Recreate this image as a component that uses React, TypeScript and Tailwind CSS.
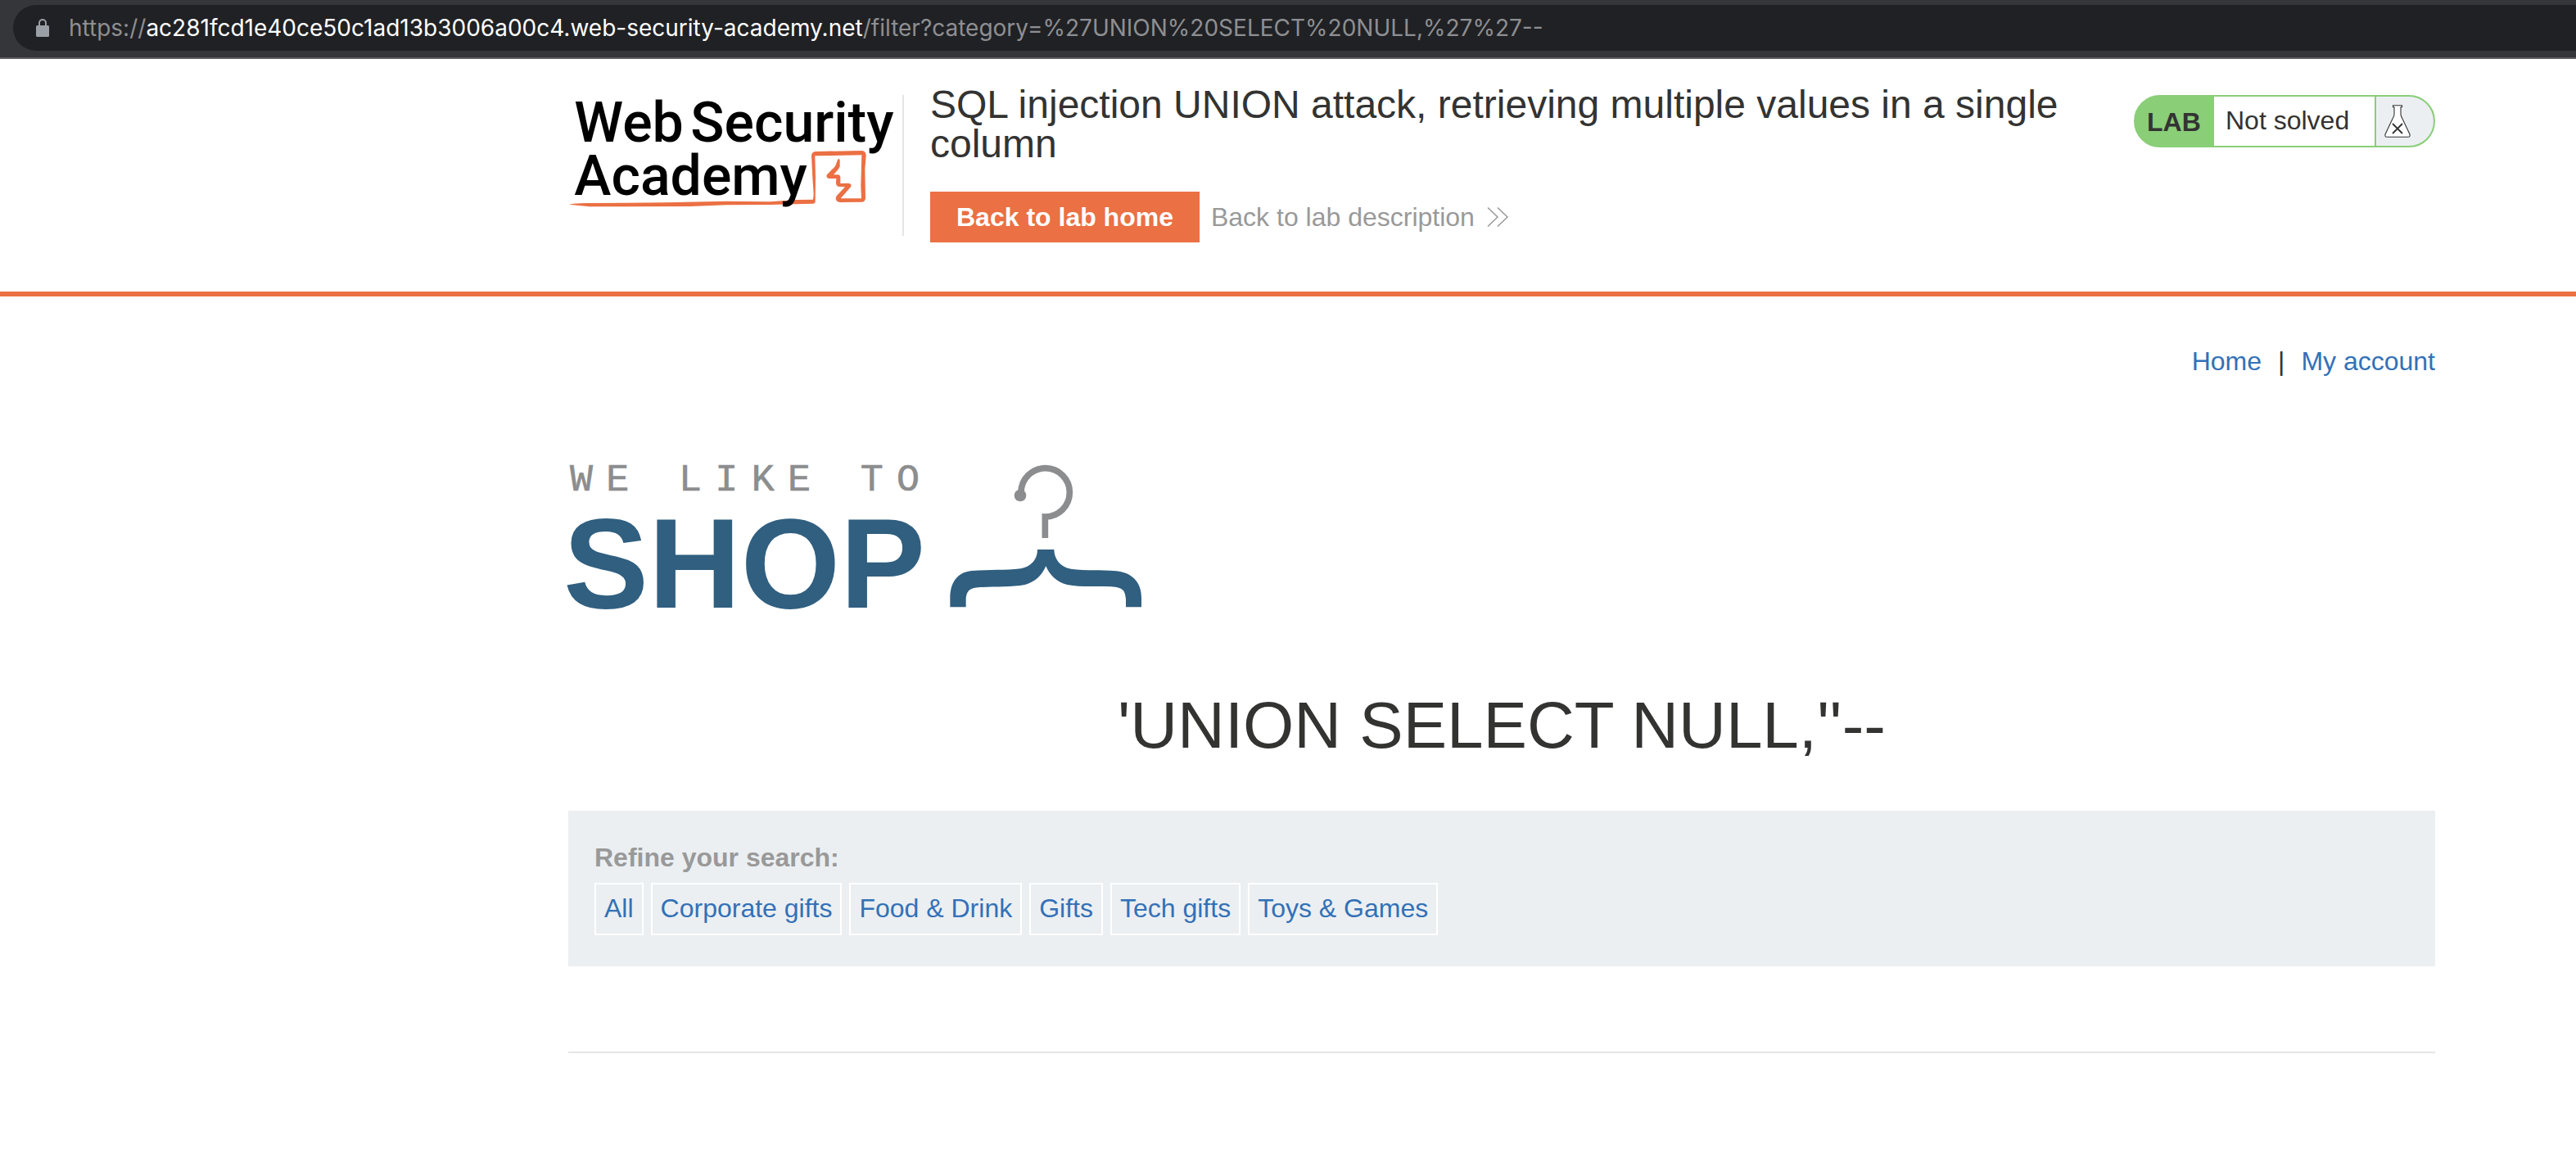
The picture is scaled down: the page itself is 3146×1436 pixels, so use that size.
const categories = ["All", "Corporate gifts", "Food & Drink", "Gifts", "Tech gifts", "Toys & Games"];

function AddressBar() {
  return (
    <div className="h-[72px] border-b-2 border-[#605b62] bg-[#35363a] pt-[6px] pl-4">
      <div className="flex h-14 items-center rounded-l-full bg-[#202124] pl-7">
        <svg className="mr-6 h-[22px] w-4 shrink-0" viewBox="0 0 16 22" fill="none">
          <path d="M4 9V5a4 4 0 0 1 8 0v4" stroke="#9aa0a6" strokeWidth="2" />
          <rect x="0" y="8" width="16" height="14" rx="1.5" fill="#9aa0a6" />
        </svg>
        <p className="whitespace-nowrap font-['Inter',sans-serif] text-[28px] leading-9 text-[#8e8f92]">
          https://
          <span className="text-white">ac281fcd1e40ce50c1ad13b3006a00c4.web-security-academy.net</span>
          /filter?category=%27UNION%20SELECT%20NULL,%27%27--
        </p>
      </div>
    </div>
  );
}

function AcademyLogo() {
  return (
    <svg
      className="mt-10 h-36 w-[400px] shrink-0 overflow-visible"
      viewBox="42 66 1200 432"
      role="img"
      aria-label="Web Security Academy"
    >
      <g fill="#eb7043">
        <path d="M44 479Q70 473 120 474L400 472L620 467L780 469L880 462L939 461L941 440L937 380L933 300Q934 286 948 285L1118 282Q1133 283 1133 300L1129 350L1131 455Q1130 470 1116 470L1038 471Q1022 470 1022 456L1025 448L1056 415L1030 413Q1022 410 1023 398L1024 384L996 384Q985 380 990 370L1020 339L1029 316Q1033 306 1037 316L1037 340Q1033 350 1025 358L1014 370L1030 370Q1039 371 1039 380L1039 402L1068 401Q1083 404 1077 415L1040 457L1116 457L1114 410L1117 298L946 301L948 380L947 470Q946 476 938 476L780 480L620 481L490 486L120 487Z" />
      </g>
      <g fill="#000" fontFamily="Roboto, sans-serif" fontWeight="500">
        <text x="64" y="250" fontSize="204">Web</text>
        <text x="490" y="250" fontSize="204">Security</text>
        <text x="64" y="444" fontSize="204">Academy</text>
      </g>
    </svg>
  );
}

function LabStatus() {
  return (
    <div className="mt-11 flex h-16 w-[368px] shrink-0 overflow-hidden rounded-full border-2 border-[#8ace78] bg-[#8ace78] text-[32px] leading-9 text-[#333332]">
      <p className="w-24 pt-[13px] pl-[14px] font-bold">LAB</p>
      <p className="flex-1 bg-white pt-[11px] pl-[14px]">Not solved</p>
      <div className="w-[72px] border-l-2 border-[#8ace78] bg-[#ebeff2] pt-[10px] pl-[10px]">
        <svg className="h-10 w-8" viewBox="0 0 32 40" fill="none" stroke="#333332">
          <path
            d="M10.500 .8H21.500V2.800H20V12Q20.500 14 22 17L31 36Q31.600 39.300 29 39.300H3Q.4 39.300 1 36L10 17Q11.800 14 12 12V2.800H10.500Z"
            fill="#fff"
            strokeWidth="1.100"
          />
          <path d="M10 23L22 35M22 23L10 35" strokeWidth="1.800" />
        </svg>
      </div>
    </div>
  );
}

function ShopLogo() {
  return (
    <svg
      className="mt-[101px] h-[190px] w-[704px] overflow-visible"
      viewBox="72 60 2112 570"
      role="img"
      aria-label="We like to shop"
    >
      <text
        x="78 211 344 477 610 743 876 1009 1142 1275"
        y="178"
        fontSize="140"
        fill="#8c8d8e"
        stroke="#8c8d8e"
        strokeWidth="2"
        fontFamily="'Liberation Mono', monospace"
      >
        WE LIKE TO
      </text>
      <text
        x="54"
        y="606"
        fontSize="468"
        fontWeight="700"
        fill="#305f80"
        fontFamily="'Liberation Sans', Arial, sans-serif"
      >
        SHOP
      </text>
      <g transform="translate(1290 0)">
        <path d="M441 184A89 89 0 1 1 529 273V351" fill="none" stroke="#8c8d8e" strokeWidth="23" />
        <circle cx="438" cy="195" r="22" fill="#8c8d8e" />
        <path
          d="M501 393H562C562 425 582 457 624 464C680 472 730 465 790 472C850 478 882 515 882 570V604H825V575C822 540 812 532 770 529C710 526 660 532 610 522C570 512 545 485 532 454C519 485 493 512 455 522C410 531 350 528 300 531C255 532 240 540 239 580V604H181V570C181 515 207 476 260 471C330 466 380 470 440 463C480 455 501 428 501 393Z"
          fill="#305f80"
        />
      </g>
    </svg>
  );
}

export default function App() {
  return (
    <div className="min-h-screen bg-white font-['Liberation_Sans',Arial,sans-serif] text-[32px] leading-9 text-[#333332]">
      <AddressBar />

      <header className="flex items-start border-b-[6px] border-[#eb7043] pr-[172px] pb-[60px] pl-[694px]">
        <AcademyLogo />
        <div className="mt-11 mr-8 ml-2 h-[172px] w-[2px] shrink-0 bg-[#e5e5e5]" />
        <div className="min-w-0 flex-1 pt-8 pr-8">
          <h2 className="text-[48px] leading-[48px]">
            SQL injection UNION attack, retrieving multiple values in a single column
          </h2>
          <div className="mt-[34px] flex items-center gap-[14px]">
            <a href="#home" className="bg-[#eb7043] px-8 py-[13px] font-bold text-white">
              Back to lab home
            </a>
            <a href="#description" className="flex items-center gap-[14px] text-[#999]">
              Back to lab description
              <svg className="h-6 w-7" viewBox="0 0 28 24" fill="none" stroke="#999" strokeWidth="1.500">
                <path d="M2 .5L14 12L2 23.500M14 .5L26 12L14 23.500" />
              </svg>
            </a>
          </div>
        </div>
        <LabStatus />
      </header>

      <main className="pr-[172px] pl-[694px]">
        <nav className="flex justify-end gap-5 pt-[61px]">
          <a href="#home" className="text-[#3371b7]">Home</a>
          <span>|</span>
          <a href="#account" className="text-[#3371b7]">My account</a>
        </nav>

        <ShopLogo />

        <h1 className="mt-24 text-center text-[80px] leading-[80px]">'UNION SELECT NULL,''--</h1>

        <section className="mt-16 bg-[#ebeff2] px-8 pt-[39px] pb-[38px]">
          <h3 className="font-bold text-[#999]">Refine your search:</h3>
          <div className="mt-[13px] flex gap-[9px]">
            {categories.map((name) => (
              <a
                key={name}
                href="#filter"
                className="border-2 border-white px-[10px] pt-[11px] pb-[13px] whitespace-nowrap text-[#3371b7]"
              >
                {name}
              </a>
            ))}
          </div>
        </section>

        <hr className="mt-[104px] border-t-2 border-[#e5e5e5]" />
      </main>
    </div>
  );
}
